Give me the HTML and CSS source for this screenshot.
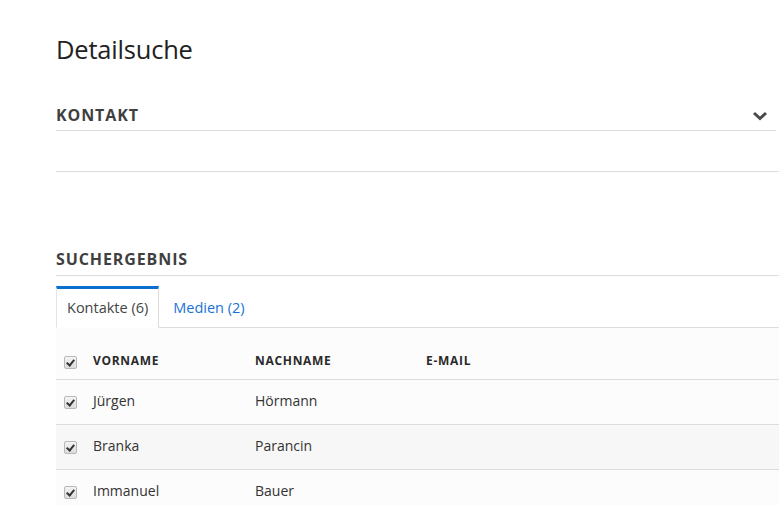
FILE: index.html
```html
<!DOCTYPE html>
<html lang="de">
<head>
<meta charset="utf-8">
<link rel="stylesheet" href="styles.css">
</head>
<body>
<main class="page">
  <h1 class="title">Detailsuche</h1>
  <section class="panel">
    <div class="panel-head">
      <h2 class="section-title">KONTAKT</h2>
      <svg class="chevron" width="16" height="10" viewBox="0 0 16 10"><path d="M2 2 L8 7.5 L14 2" fill="none" stroke="#4a4a4a" stroke-width="3"/></svg>
    </div>
    <div class="panel-body"></div>
  </section>

  <section class="results">
    <h2 class="section-title results-title">SUCHERGEBNIS</h2>
    <div class="tabs">
      <div class="tab active">Kontakte (6)</div>
      <div class="tab">Medien (2)</div>
      <div class="tab-fill"></div>
    </div>
    <table class="grid">
      <thead>
        <tr>
          <th class="c-check"><span class="cb"></span></th>
          <th class="c-first">VORNAME</th>
          <th class="c-last">NACHNAME</th>
          <th>E-MAIL</th>
        </tr>
      </thead>
      <tbody>
        <tr><td class="c-check"><span class="cb"></span></td><td>Jürgen</td><td>Hörmann</td><td></td></tr>
        <tr class="alt"><td class="c-check"><span class="cb"></span></td><td>Branka</td><td>Parancin</td><td></td></tr>
        <tr><td class="c-check"><span class="cb"></span></td><td>Immanuel</td><td>Bauer</td><td></td></tr>
      </tbody>
    </table>
  </section>
</main>
</body>
</html>
```

FILE: styles.css
```css
html, body {
  margin: 0;
  padding: 0;
  background: #fff;
}
body {
  font-family: "Open Sans", "Noto Sans", sans-serif;
  color: #333;
  overflow: hidden;
}
.page {
  padding: 29px 0 0 56px;
}
.title {
  margin: 0;
  font-weight: 400;
  font-size: 25.5px;
  line-height: 40px;
  color: #222;
  letter-spacing: -0.2px;
}
.panel {
  margin-top: 27px;
  margin-right: 3px;
}
.panel-head {
  display: flex;
  align-items: flex-end;
  justify-content: space-between;
  height: 35px;
  box-sizing: border-box;
  padding-bottom: 5px;
  border-bottom: 1px solid #dcdcdc;
}
.section-title {
  margin: 0;
  font-size: 16px;
  font-weight: 700;
  letter-spacing: 0.9px;
  color: #3f3f3f;
  line-height: 20px;
}
.chevron {
  margin-right: 8px;
  margin-bottom: 4px;
}
.panel-body {
  height: 40px;
  border-bottom: 1px solid #dcdcdc;
  margin-right: -3px;
}
.results {
  margin-top: 77px;
}
.results-title {
  padding-bottom: 6px;
  border-bottom: 1px solid #dcdcdc;
}
.tabs {
  display: flex;
  margin-top: 10px;
}
.tab {
  font-size: 14.5px;
  line-height: 38px;
  padding: 0 14px 0 14px;
  color: #1a73d4;
  border-bottom: 1px solid #dcdcdc;
  border-top: 3px solid transparent;
}
.tab.active {
  color: #444;
  border-top: 3px solid #0b6fd0;
  border-left: 1px solid #e4e4e4;
  border-right: 1px solid #dcdcdc;
  border-bottom: 1px solid transparent;
  padding: 0 10px 0 10px;
  background: #fff;
}
.tab-fill {
  flex: 1;
  border-bottom: 1px solid #dcdcdc;
}
.grid {
  width: 100%;
  border-collapse: collapse;
  background: #fcfcfc;
}
.grid th {
  text-align: left;
  font-size: 12px;
  font-weight: 700;
  letter-spacing: 0.7px;
  color: #2a2a2a;
  height: 51px;
  padding: 14px 0 0 0;
  box-sizing: border-box;
  border-bottom: 1px solid #dcdcdc;
}
.grid td {
  font-size: 14px;
  color: #333;
  height: 45px;
  padding: 0 0 3px 0;
  box-sizing: border-box;
  border-bottom: 1px solid #dcdcdc;
}
.grid tr.alt td {
  background: #f7f7f7;
}
.c-check {
  width: 37px;
  padding-left: 8px !important;
  box-sizing: border-box;
}
.c-first {
  width: 162px;
}
.c-last {
  width: 171px;
}
.cb {
  display: inline-block;
  width: 11px;
  height: 11px;
  border: 1px solid #b8b8b8;
  border-radius: 2px;
  background: linear-gradient(#f4f4f4, #dcdcdc);
  position: relative;
  vertical-align: middle;
  margin-top: 2px;
}
.cb::after {
  content: "";
  position: absolute;
  left: 3px;
  top: 1px;
  width: 3px;
  height: 6px;
  border: solid #333;
  border-width: 0 2px 2px 0;
  transform: rotate(40deg);
}
```
